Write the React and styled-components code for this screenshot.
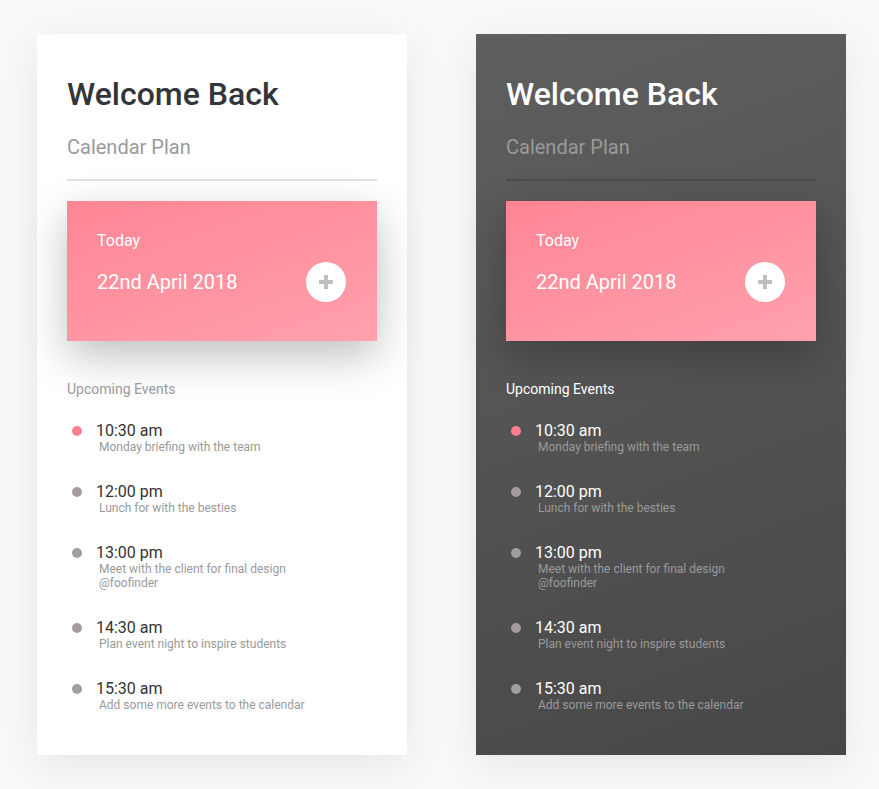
import React from "react"
import styled, {createGlobalStyle} from "styled-components"

const GlobalStyle = createGlobalStyle`
  body {
    margin: 0;
    background: #f9f9f9;
    font-family: Roboto, "Noto Sans", sans-serif;
  }
`

const Page = styled.div`
  display: flex;
  gap: 69px;
  padding: 34px 0 0 37px;
  min-height: 789px;
  box-sizing: border-box;
`

const Card = styled.div`
  width: 370px;
  height: 721px;
  box-sizing: border-box;
  padding: 41px 30px 0;
  background: ${p => (p.dark ? "linear-gradient(160deg, #5f5f5f 0%, #474747 100%)" : "#fff")};
  box-shadow: 0 10px 40px rgba(0, 0, 0, 0.08);
`

const Title = styled.h1`
  margin: 0;
  font-size: 32px;
  line-height: 38px;
  font-weight: 500;
  color: ${p => (p.dark ? "#fff" : "#323539")};
`

const Subtitle = styled.div`
  margin-top: 22px;
  font-size: 20px;
  line-height: 24px;
  color: #9a9a9a;
`

const Divider = styled.div`
  margin-top: 20px;
  height: 2px;
  background: ${p => (p.dark ? "#4b4b4b" : "#e2e2e2")};
`

const TodayCard = styled.div`
  margin-top: 20px;
  height: 140px;
  box-sizing: border-box;
  padding: 30px 31px 0 30px;
  background: linear-gradient(160deg, #ff8594 0%, #ffa1ad 100%);
  box-shadow: 0 15px 40px rgba(0, 0, 0, 0.25);
  color: #fff;
`

const TodayLabel = styled.div`
  font-size: 16px;
  line-height: 20px;
`

const DateRow = styled.div`
  margin-top: 11px;
  display: flex;
  align-items: center;
  justify-content: space-between;
  height: 40px;
  font-size: 20px;
`

const AddButton = styled.div`
  width: 40px;
  height: 40px;
  border-radius: 50%;
  background: #fff;
  display: flex;
  align-items: center;
  justify-content: center;
`

const SectionLabel = styled.div`
  margin-top: 39px;
  font-size: 14px;
  line-height: 18px;
  color: ${p => (p.dark ? "#fff" : "#9a9a9a")};
`

const EventList = styled.div`
  margin-top: 24px;
  display: flex;
  flex-direction: column;
  gap: 29px;
`

const Event = styled.div`
  display: grid;
  grid-template-columns: 10px 1fr;
  column-gap: 14px;
  padding-left: 5px;
`

const Dot = styled.span`
  width: 10px;
  height: 10px;
  margin-top: 4px;
  border-radius: 50%;
  background: ${p => (p.active ? "#ff7f8f" : "#a39d9f")};
`

const Time = styled.div`
  font-size: 16px;
  line-height: 18px;
  color: ${p => (p.dark ? "#fff" : "#333")};
`

const Desc = styled.div`
  margin-left: 3px;
  font-size: 12px;
  line-height: 14px;
  color: #9a9a9a;
`

const events = [
  {time: "10:30 am", desc: ["Monday briefing with the team"]},
  {time: "12:00 pm", desc: ["Lunch for with the besties"]},
  {time: "13:00 pm", desc: ["Meet with the client for final design", "@foofinder"]},
  {time: "14:30 am", desc: ["Plan event night to inspire students"]},
  {time: "15:30 am", desc: ["Add some more events to the calendar"]},
]

const PlusIcon = () => (
  <svg width="16" height="16" viewBox="0 0 16 16">
    <path d="M8 1v14M1 8h14" stroke="#bfbfbf" strokeWidth="4" />
  </svg>
)

const Planner = ({dark}) => (
  <Card dark={dark}>
    <Title dark={dark}>Welcome Back</Title>
    <Subtitle>Calendar Plan</Subtitle>
    <Divider dark={dark} />
    <TodayCard>
      <TodayLabel>Today</TodayLabel>
      <DateRow>
        <span>22nd April 2018</span>
        <AddButton>
          <PlusIcon />
        </AddButton>
      </DateRow>
    </TodayCard>
    <SectionLabel dark={dark}>Upcoming Events</SectionLabel>
    <EventList>
      {events.map((e, i) => (
        <Event key={e.time}>
          <Dot active={i === 0} />
          <div>
            <Time dark={dark}>{e.time}</Time>
            {e.desc.map(line => (
              <Desc key={line}>{line}</Desc>
            ))}
          </div>
        </Event>
      ))}
    </EventList>
  </Card>
)

export default function App() {
  return (
    <>
      <GlobalStyle />
      <Page>
        <Planner />
        <Planner dark />
      </Page>
    </>
  )
}
